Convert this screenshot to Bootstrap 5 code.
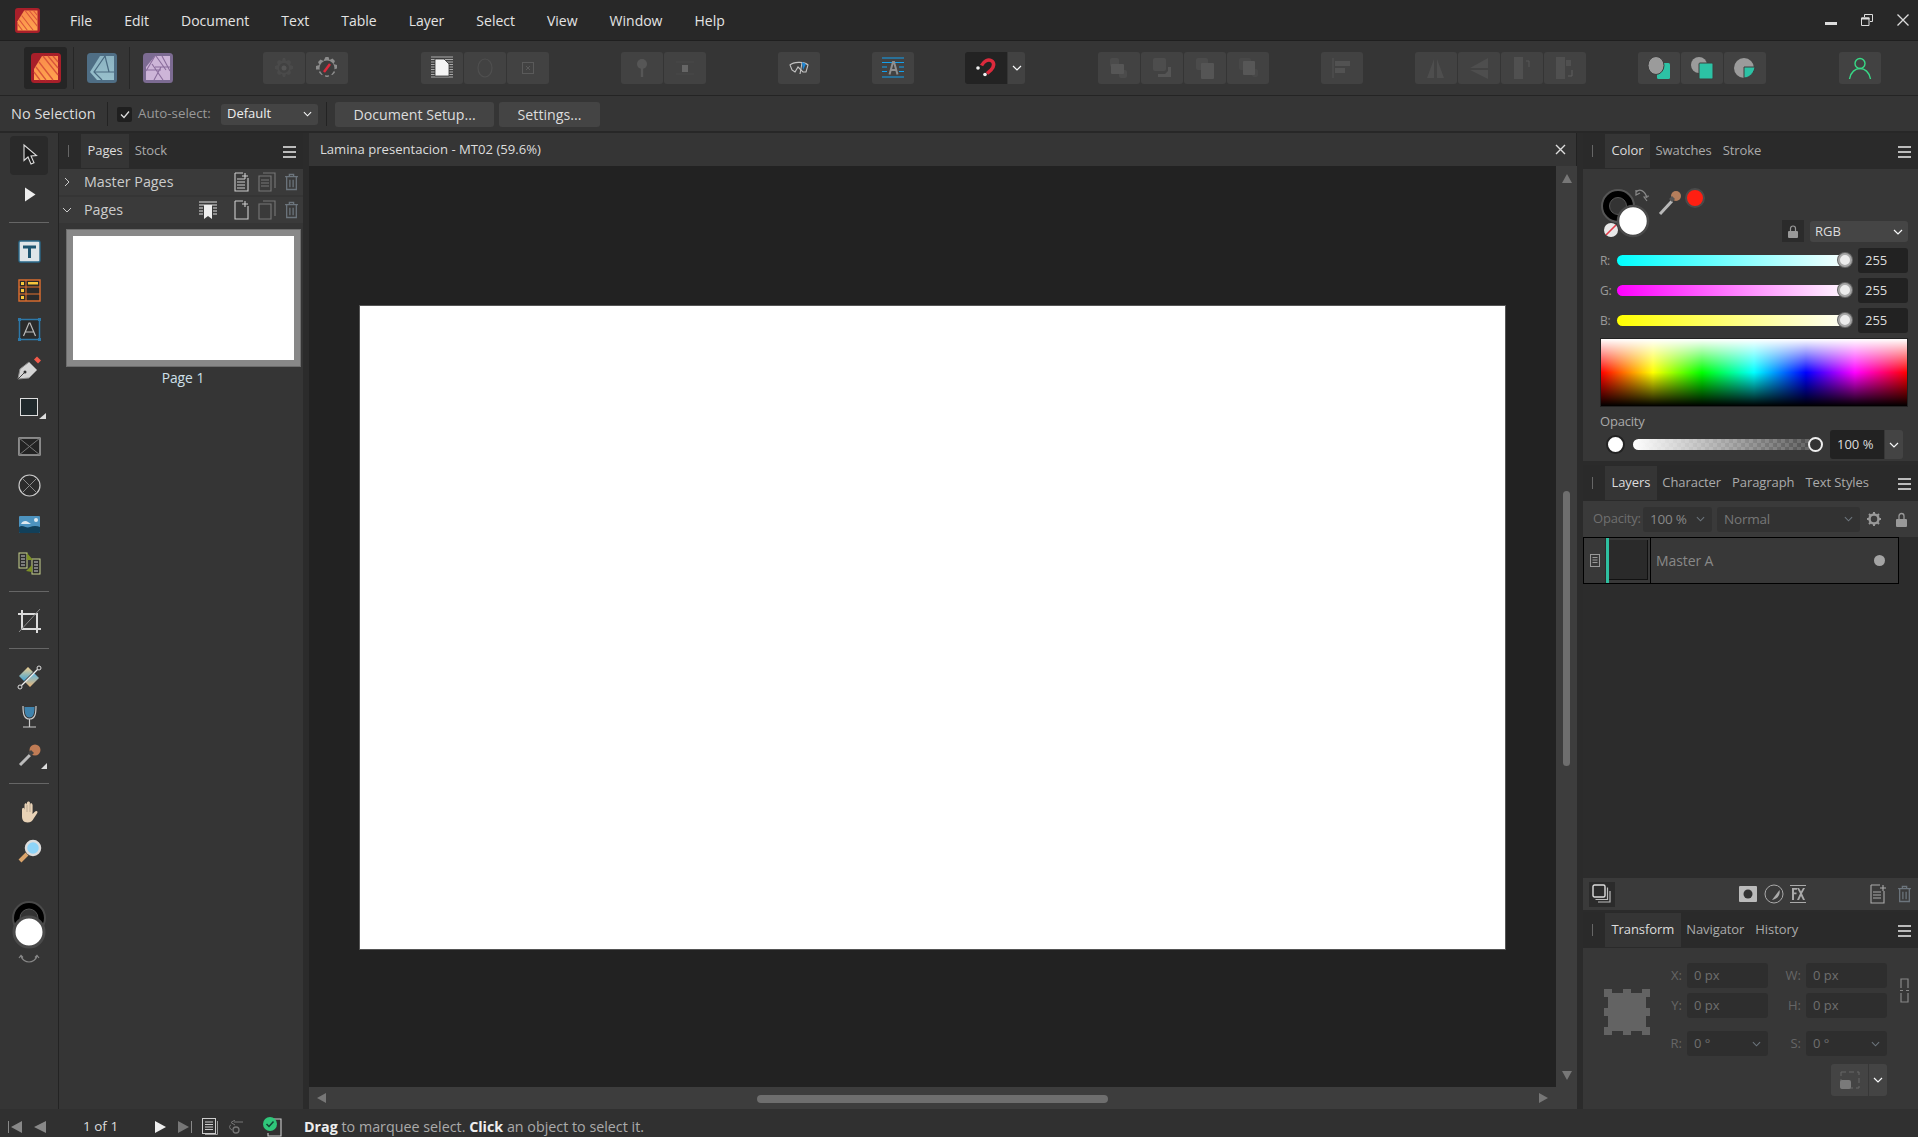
<!DOCTYPE html>
<html lang="en">
<head>
<meta charset="utf-8">
<title>Affinity Publisher</title>
<link href="https://cdn.jsdelivr.net/npm/bootstrap@5.3.0/dist/css/bootstrap.min.css" rel="stylesheet">
<style>
html,body{height:100%;margin:0;background:#282828;overflow:hidden}
body{font-family:"Open Sans","Noto Sans",sans-serif;font-size:13px;color:#ccc;width:1918px;height:1137px;display:flex;flex-direction:column}
svg{display:block;flex:none}
.af-menubar{height:41px;background:#282828;border-bottom:1px solid #1f1f1f;flex:none}
.af-logo{margin-left:15px;margin-right:30px}
.af-menu{gap:32px;font-size:14px;color:#e4e4e4}
.af-winbtns{margin-left:auto;margin-right:9px;gap:24px}
.af-toolbar{height:55px;background:#353535;border-bottom:1px solid #242424;flex:none;padding-left:24px}
.af-persona{width:43px;height:42px;border-radius:3px;display:flex;align-items:center;justify-content:center}
.af-persona-on{background:#252525}
.af-vline{width:1px;background:#262626;height:42px;margin:0 6px}
.af-tb{width:42px;height:32px;background:#424242;border-radius:3px;display:flex;align-items:center;justify-content:center;flex:none}
.af-tbdark{background:#232323;border-radius:3px 0 0 3px}
.af-tbdrop{width:17px;height:32px;background:#424242;border-radius:0 3px 3px 0;display:flex;align-items:center;justify-content:center;margin-left:1px}
.af-grp{gap:1px}
.ms-g1{margin-left:84px}.ms-g2{margin-left:73px}.ms-g3{margin-left:72px}.ms-g4{margin-left:72px}.ms-g5{margin-left:52px}.ms-g6{margin-left:51px}.ms-g7{margin-left:73px}.ms-g8{margin-left:52px}.ms-g9{margin-left:52px}.ms-g10{margin-left:73px}.ms-g11{margin-left:52px}
.af-context{height:37px;background:#353535;border-bottom:2px solid #272727;flex:none;font-size:14.5px;color:#ddd;padding-top:1px}
.af-nosel{margin-left:11px;width:84px;white-space:nowrap}
.af-ctxdiv{width:1px;height:24px;background:#232323;flex:none}
.af-ctxdiv1{margin-left:12px}
.af-check{width:15px;height:15px;background:#1f1f1f;border-radius:2px;margin-left:9px;display:flex;align-items:center;justify-content:center}
.af-autolab{color:#999;margin-left:6px;width:74px;font-size:13.3px;white-space:nowrap}
.af-ctxsel{width:97px;height:21px;margin-left:9px;margin-right:8px;background:#444;border-radius:3px;padding:0 6px;font-size:13px;color:#eee;display:flex;align-items:center;justify-content:space-between}
.btn.af-ctxbtn{height:25px;padding:0;background:#444;border:0;border-radius:3px;font-size:14.2px;color:#ddd;line-height:25px;--bs-btn-hover-bg:#444}
.af-w159{width:159px;margin-left:8px}.af-w101{width:101px;margin-left:5px}
.af-main{flex:1 1 0;min-height:0}
.af-tools{width:59px;background:#353535;border-right:1px solid #232323;flex:none;align-items:center;padding-top:3px}
.af-tool{width:38px;height:39px;flex:none;border-radius:4px}
.af-tool-on{background:#2a2a2a}
.af-tooldiv{width:40px;height:1px;background:#666;margin:8px 0 9px;flex:none}
.af-colwid{margin-top:30px}
.af-pages{width:244px;background:#353535;flex:none}
.af-head{height:36px;background:#2a2a2a;flex:none;position:relative;padding-left:22px;padding-top:1px}
.af-handle{position:absolute;left:9px;top:12px;width:1px;height:12px;background:#666}
.af-tabs{gap:0;flex-wrap:nowrap}
.af-tabs .nav-link{padding:0 5.5px;height:34px;line-height:32px;font-size:13px;color:#aaa;border:0;border-radius:0;white-space:nowrap;letter-spacing:-.08px}
.af-tabs .nav-link.active{background:#353535;color:#ddd;padding:0 6.5px}
.af-burger{margin-left:auto;margin-right:7px;align-self:center}
.af-row{height:26px;background:#3a3a3a;margin-bottom:2px;padding-left:3px;flex:none;font-size:14.3px;color:#ccc}
.af-rowlab{margin-left:12px;white-space:nowrap}
.af-rowicons{margin-right:4px;margin-left:auto;gap:8px}
.af-rowicon1{margin-right:9px}
.af-thumb{margin:5px 3px 0 8px;height:136px;width:233px;border:6px solid #888;outline:1px solid #6d6d6d;background:#fff;flex:none}
.af-pagelab{width:244px;padding-left:4px;text-align:center;margin-top:2px;font-size:13.8px;color:#cfe0ea}
.af-gut{width:6px;background:#2b2b2b;flex:none}
.af-center{width:1268px;flex:none}
.af-doctab{height:33px;background:#353535;border-right:1px solid #222;flex:none;padding-left:11px;padding-right:10px;font-size:13.1px;color:#ddd}
.af-canvas{flex:1 1 0;min-height:0;background:#222}
.af-artboard{flex:1 1 0;display:flex;align-items:center;justify-content:center;padding-top:2px}
.af-page{width:1145px;height:643px;background:#fff;outline:1px solid #555}
.af-vbar{width:21px;background:#3d3d3d;flex:none;align-items:center;padding-top:8px;padding-bottom:7px}
.af-vthumb{width:7px;height:275px;background:#6e6e6e;border-radius:4px;margin-top:308px}
.af-hbar{height:22px;background:#3d3d3d;flex:none;padding-left:8px;padding-right:29px}
.af-hthumb{width:351px;height:8px;background:#6e6e6e;border-radius:4px;margin-left:431px;margin-top:1px}
.af-right{width:335px;flex:none;background:#2b2b2b}
.af-body{background:#373737}
.af-colorbody{height:292px;flex:none;margin-bottom:4px}
.af-c1{padding:0 10px 0 7px;height:79px}
.af-c1svg{margin-bottom:4px}
.af-lock{width:22px;height:22px;background:#2b2b2b;display:flex;align-items:center;justify-content:center;margin-right:6px;margin-bottom:6px}
.af-rgb{width:98px;height:21px;background:#454545;border-radius:3px;color:#ddd;font-size:13px;display:flex;align-items:center;justify-content:space-between;padding:0 5px;margin-bottom:6px}
.af-sl{height:25px;margin-bottom:5px;padding-left:17px;padding-right:10px}
.af-sllab{width:17px;font-size:12px;color:#999;letter-spacing:-.3px}
.af-track{width:235px;height:11px;border-radius:6px;position:relative;flex:none}
.af-tr{background:linear-gradient(90deg,#0ff,#fff)}
.af-tg{background:linear-gradient(90deg,#f0f,#fff)}
.af-tb2{background:linear-gradient(90deg,#ff0,#fff)}
.af-knob{position:absolute;right:0;top:-2px;width:14px;height:14px;border-radius:50%;background:#ececec;border:2px solid #a8a8a8;box-shadow:0 0 0 1px #666}
.af-num{width:50px;height:25px;margin-left:6px;background:#222;border-radius:3px;color:#ddd;font-size:13px;padding-left:7px;padding-top:1px;display:flex;align-items:center;flex:none}
.af-spec{height:69px;margin:0 10px 0 17px;border:1px solid #222;background:linear-gradient(180deg,#fff 0%,rgba(255,255,255,0) 50%,rgba(0,0,0,0) 50%,#000 100%),linear-gradient(90deg,#f00,#ff0 17%,#0f0 33%,#0ff 50%,#00f 67%,#f0f 83%,#f00);flex:none}
.af-oplab{padding-left:17px;margin-top:6px;height:17px;font-size:13px;color:#aaa;line-height:17px;letter-spacing:-.2px}
.af-oprow{padding-left:23px;height:29px}
.af-opdot{width:19px;height:19px;border-radius:50%;background:#fff;border:2px solid #222;flex:none}
.af-optrack{width:188px;height:11px;margin-left:8px;border-radius:6px;position:relative;background:linear-gradient(90deg,#fff,rgba(255,255,255,0)),repeating-conic-gradient(#5c5c5c 0 25%,#444 0 50%) 0 0/8px 8px;flex:none}
.af-opknob{position:absolute;right:-2px;top:-2px;width:15px;height:15px;border-radius:50%;background:#333;border:2px solid #eee}
.af-opnum{width:54px;height:29px;margin-left:9px;background:#222;border-radius:3px 0 0 3px;color:#ddd;padding-left:7px;display:flex;align-items:center;flex:none;font-size:13px}
.af-opdrop{width:18px;height:29px;background:#444;margin-left:1px;display:flex;align-items:center;justify-content:center;border-radius:0 3px 3px 0}
.af-layers{flex:1 1 0;min-height:0;background:#2c2c2c}
.af-laybar{height:36px;background:#3a3a3a;flex:none;color:#6f6f6f;font-size:13px;padding-left:10px;letter-spacing:-.2px}
.af-oplab2{width:50px;white-space:nowrap}
.af-lfield{height:25px;background:#323232;border-radius:3px;color:#888;font-size:13.5px;display:flex;align-items:center;justify-content:space-between;padding:0 7px;flex:none}
.af-w69{width:69px}.af-w143{width:143px;margin-left:5px;color:#777}
.af-gear{margin-left:7px}
.af-lolock{margin-left:auto;margin-right:11px}
.af-layrow{height:47px;width:316px;border:1px solid #000;background:#383838;flex:none}
.af-laycell{width:22px;display:flex;align-items:center;justify-content:center;border-right:1px solid #2a2a2a;height:100%}
.af-laythumb{width:45px;height:100%;border-left:3px solid #2fbfa0;border-right:1px solid #000;background:#383838;padding:2px 2px 3px 0;flex:none}
.af-laythumb div{height:100%;background:#2a2a2a;border-right:1px solid #111;border-bottom:1px solid #111}
.af-layname{margin-left:5px;font-size:14px;color:#888;flex-grow:1;letter-spacing:-.1px}
.af-laydot{width:11px;height:11px;border-radius:50%;background:#a4a4a4;margin-right:13px}
.af-laybtm{height:32px;background:#3a3a3a;flex:none;padding-left:6px;margin-bottom:2px}
.af-dupbox{width:26px;height:25px;background:#2b2b2b;display:flex;align-items:center;justify-content:center}
.af-m1{margin-left:124px}.af-m2{margin-left:7px}.af-m3{margin-left:6px}.af-m4{margin-left:64px}.af-m5{margin-left:10px}
.af-transform{flex:none;height:161px;padding-top:15px}
.af-anchor{margin-left:21px;margin-top:26px;margin-right:14px}
.af-grid{display:grid;grid-template-columns:23px 81px 38px 81px 30px;grid-template-rows:25px 25px 3px 25px;row-gap:5px;align-items:center}
.af-tlab{text-align:right;color:#666;font-size:13px;padding-right:5px}
.af-tfield{height:25px;background:#2e2e2e;border-radius:3px;color:#6f6f6f;font-size:13px;padding:0 7px;display:flex;align-items:center;justify-content:space-between}
.af-gap{grid-column:1/6;height:3px}
.af-chain{grid-row:1/3;grid-column:5;justify-self:end;margin-right:8px}
.af-torig{margin-left:167px;margin-top:8px;height:32px;width:56px;display:flex}
.af-torig-main{width:37px;background:#444;border-radius:3px 0 0 3px;display:flex;align-items:center;justify-content:center}
.af-torig-dd{width:18px;background:#444;margin-left:1px;border-radius:0 3px 3px 0;display:flex;align-items:center;justify-content:center}
.af-status{height:28px;background:#303030;flex:none;font-size:14.3px;color:#aaa;padding-top:7px}
.af-status b{color:#eee;font-weight:700}
.af-count{width:34px;margin-left:37px;margin-right:38px;color:#ddd;white-space:nowrap;font-size:13.5px}
.af-st1{margin-left:10px}.af-st2{margin-left:10px}.af-st3{margin-left:18px}
.af-hint{margin-left:22px;white-space:nowrap}
</style>
</head>
<body>
<svg width="0" height="0" class="position-absolute">
<defs>
<symbol id="chev" viewBox="0 0 10 6"><path d="M1 1l4 4 4-4" fill="none" stroke="currentColor" stroke-width="1.2"/></symbol>
<symbol id="burger" viewBox="0 0 13 12"><path d="M0 1h13M0 6h13M0 11h13" stroke="#bbb" stroke-width="2"/></symbol>
<symbol id="trash" viewBox="0 0 14 16"><path d="M1 3h12M5 3V1h4v2M2.500 3v12h9V3M5.500 6v7M8.500 6v7" fill="none" stroke="currentColor" stroke-width="1.2"/></symbol>
<linearGradient id="lg-pub" x1="0" y1="0" x2="0" y2="1"><stop offset="0" stop-color="#f98b4b"/><stop offset="1" stop-color="#ffa44f"/></linearGradient>
<linearGradient id="lg-fill1" x1="0" y1="0" x2="0" y2="1"><stop offset="0" stop-color="#f2cf8f"/><stop offset="1" stop-color="#3fa3d6"/></linearGradient>
<linearGradient id="lg-fill2" x1="0" y1="0" x2="0" y2="1"><stop offset="0" stop-color="#5fb9e3"/><stop offset="1" stop-color="#eeb675"/></linearGradient>
<symbol id="pub" viewBox="0 0 30 30"><rect width="30" height="30" rx="3.500" fill="#a81f2a"/><path d="M11 3h16v24H3V16z" fill="url(#lg-pub)"/><path d="M12 3l15 19M8 9l14 18M5 14l10 13M3 19l6 8M17 3l10 12M22 3l5 6" stroke="#d9543a" stroke-width="1.300"/></symbol>
</defs>
</svg>

<div class="af-menubar d-flex align-items-center">
  <svg class="af-logo" width="25" height="25"><use href="#pub"/></svg>
  <div class="af-menu d-flex"><span>File</span><span>Edit</span><span>Document</span><span>Text</span><span>Table</span><span>Layer</span><span>Select</span><span>View</span><span>Window</span><span>Help</span></div>
  <div class="af-winbtns d-flex align-items-center">
    <svg width="12" height="12" viewBox="0 0 12 12"><rect y="8" width="12" height="3" fill="#ddd"/></svg>
    <svg width="12" height="12" viewBox="0 0 12 12"><path d="M3.500 3V.5h8v7H9M.5 4h7.500v7.500H.5z" fill="none" stroke="#ddd"/><path d="M.5 4.500h8" stroke="#ddd" stroke-width="2"/></svg>
    <svg width="12" height="12" viewBox="0 0 12 12"><path d="M.5.5l11 11M11.500.5l-11 11" stroke="#ddd" stroke-width="1.300"/></svg>
  </div>
</div>

<div class="af-toolbar d-flex align-items-center">
  <div class="af-persona af-persona-on"><svg width="30" height="30"><use href="#pub"/></svg></div>
  <div class="af-vline"></div>
  <div class="af-persona"><svg width="30" height="30" viewBox="0 0 30 30"><defs><linearGradient id="lg-d" x1="0" y1="0" x2="0" y2="1"><stop offset="0" stop-color="#8cb3c2"/><stop offset="1" stop-color="#98c0cc"/></linearGradient></defs><rect width="30" height="30" rx="3.500" fill="#4f6e85"/><path d="M13 3h14v24H10L3 19z" fill="url(#lg-d)"/><path d="M18 3L7 19l8 8M7 19h20M18 3l4 16" fill="none" stroke="#4a6a80" stroke-width="1.200"/></svg></div>
  <div class="af-vline"></div>
  <div class="af-persona"><svg width="30" height="30" viewBox="0 0 30 30"><rect width="30" height="30" rx="3.500" fill="#7c6b92"/><path d="M12 3h15v24H3V14z" fill="#cdb5d8"/><path d="M12 3l-9 15M19 3l8 15M3 17h15M11 27l7-13M9 11l11 16M27 14H12M13 3l10 14" fill="none" stroke="#8a6d9c" stroke-width="1.100"/></svg></div>
  <div class="af-grp d-flex ms-g1">
    <div class="af-tb"><svg width="20" height="20" viewBox="0 0 20 20"><path d="M9 0h2l1 3 3-1 2 2-1 3 3 1v3l-3 1 1 3-2 2-3-1-1 3H9l-1-3-3 1-2-2 1-3-3-1V8l3-1-1-3 2-2 3 1z" fill="#4a4a4a"/><circle cx="10" cy="10" r="5" fill="#424242"/><circle cx="10" cy="10" r="2.500" fill="#555"/></svg></div>
    <div class="af-tb"><svg width="24" height="24" viewBox="0 0 24 24"><path d="M10.500 1h3l1 3 3-1.500 2.500 2.500-1.500 3 3.500 1v3.500l-3.500 1 1.500 3-2.500 2.500-3-1.500-1 3.500h-3l-1-3.500-3 1.500-2.500-2.500 1.500-3L1 13.500V10l3.500-1-1.500-3 2.500-2.500 3 1.500z" fill="#8c8c8c"/><circle cx="12" cy="12" r="7.500" fill="#3c3c3c"/><path d="M9 16l6-8" stroke="#dc2a3c" stroke-width="2.500"/></svg></div>
  </div>
  <div class="af-grp d-flex ms-g2">
    <div class="af-tb"><svg width="24" height="24" viewBox="0 0 24 24"><path d="M1 1h22M1 3.500h22M1 6h22M1 8.500h22M1 11h22M1 13.500h22M1 16h22M1 18.500h22M1 21h22" stroke="#aaa" stroke-width="1"/><path d="M5 3h9l5 5v12H5z" fill="#f4f4f4" stroke="#333" stroke-width=".8"/></svg></div>
    <div class="af-tb"><svg width="18" height="20" viewBox="0 0 18 20"><ellipse cx="9" cy="10" rx="7" ry="9" fill="none" stroke="#4f4f4f" stroke-width="1.200"/></svg></div>
    <div class="af-tb"><svg width="20" height="20" viewBox="0 0 20 20"><rect x="4.500" y="4.500" width="11" height="11" fill="none" stroke="#5a5a5a"/><path d="M8 8l4 4M12 8l-4 4" stroke="#5a5a5a"/></svg></div>
  </div>
  <div class="af-grp d-flex ms-g3">
    <div class="af-tb"><svg width="14" height="22" viewBox="0 0 14 22"><circle cx="7" cy="7" r="5" fill="#565656"/><rect x="5.800" y="11" width="2.400" height="9" fill="#565656"/></svg></div>
    <div class="af-tb"><svg width="22" height="22" viewBox="0 0 22 22"><rect x="8" y="8" width="6" height="7" fill="#666"/><path d="M2 5h18M2 17h18" stroke="#484848"/></svg></div>
  </div>
  <div class="ms-g4"><div class="af-tb"><svg width="22" height="22" viewBox="0 0 22 22"><path d="M2 8c3-3 14-4 18 0l-2 7h-3l-5-5-3 5-3-2z" fill="none" stroke="#c4c4c4" stroke-width="1.100"/><path d="M12 17l2-11" stroke="#c4c4c4" stroke-width="1.100"/><path d="M14 5l4 2-3 6z" fill="#1e88d8"/></svg></div></div>
  <div class="ms-g5"><div class="af-tb"><svg width="24" height="24" viewBox="0 0 24 24"><path d="M1 2h22M1 6.500h22M1 11h5M18 11h5M1 15.500h5M18 15.500h5M1 21h22" stroke="#12a0ef" stroke-width="1.200"/><path d="M8.500 18.500L12 6h1l3.500 12.500M10 14h5" fill="none" stroke="#8f8f8f" stroke-width="2"/></svg></div></div>
  <div class="d-flex ms-g6">
    <div class="af-tb af-tbdark"><svg width="24" height="24" viewBox="0 0 24 24"><path d="M7.500 9.500C10 5 14 3 17 4.500c4 2 3 6.500 0 9.500l-4 3.500" fill="none" stroke="#dc2a3c" stroke-width="3.600"/><circle cx="4" cy="12" r="1.800" fill="#f2f2f2"/><circle cx="11" cy="18.500" r="1.800" fill="#f2f2f2"/></svg></div>
    <div class="af-tbdrop"><svg width="10" height="6" class="text-light"><use href="#chev"/></svg></div>
  </div>
  <div class="af-grp d-flex ms-g7">
    <div class="af-tb"><svg width="24" height="24" viewBox="0 0 24 24"><rect x="3" y="2" width="9" height="9" rx="2" fill="#4b4b4b"/><rect x="12" y="14" width="8" height="8" rx="2" fill="#4b4b4b"/><rect x="4" y="8" width="13" height="10" rx="1" fill="#565656"/></svg></div>
    <div class="af-tb"><svg width="24" height="24" viewBox="0 0 24 24"><rect x="3" y="2" width="13" height="13" rx="2" fill="#4d4d4d"/><path d="M18 11h3v10H8v-3h7l3-3z" fill="#555"/></svg></div>
    <div class="af-tb"><svg width="24" height="24" viewBox="0 0 24 24"><rect x="3" y="2" width="12" height="12" rx="2" fill="#4b4b4b"/><rect x="8" y="7" width="13" height="16" rx="1" fill="#555"/></svg></div>
    <div class="af-tb"><svg width="24" height="24" viewBox="0 0 24 24"><rect x="3" y="2" width="12" height="12" rx="2" fill="#484848"/><rect x="16" y="13" width="6" height="8" rx="2" fill="#484848"/><rect x="7" y="5" width="12" height="14" rx="1" fill="#575757"/></svg></div>
  </div>
  <div class="ms-g8"><div class="af-tb"><svg width="24" height="24" viewBox="0 0 24 24"><path d="M3 2v20" stroke="#4e4e4e" stroke-width="1.500"/><path d="M5 5h15v5H5zM5 12h10v5H5z" fill="#525252"/></svg></div></div>
  <div class="af-grp d-flex ms-g9">
    <div class="af-tb"><svg width="24" height="24" viewBox="0 0 24 24"><path d="M10 3v19H3zM13 3v19h7z" fill="#4e4e4e"/></svg></div>
    <div class="af-tb"><svg width="24" height="24" viewBox="0 0 24 24"><path d="M21 2v10H3zM21 14v9L3 14z" fill="#4e4e4e"/></svg></div>
    <div class="af-tb"><svg width="24" height="24" viewBox="0 0 24 24"><rect x="4" y="1" width="9" height="22" fill="#505050"/><path d="M19 11V5h-3" fill="none" stroke="#565656"/></svg></div>
    <div class="af-tb"><svg width="24" height="24" viewBox="0 0 24 24"><rect x="3" y="1" width="9" height="22" fill="#505050"/><path d="M13 4h5v6h-5z" fill="#505050"/><path d="M19 14v6h-4" fill="none" stroke="#5e5e5e"/></svg></div>
  </div>
  <div class="af-grp d-flex ms-g11">
    <div class="af-tb"><svg width="24" height="24" viewBox="0 0 24 24"><rect x="10" y="7" width="13" height="16" rx="1.500" fill="#2cc2a5"/><ellipse cx="9" cy="9.500" rx="8" ry="9" fill="#9b9b9b" stroke="#3c3c3c"/></svg></div>
    <div class="af-tb"><svg width="24" height="24" viewBox="0 0 24 24"><circle cx="9" cy="9" r="8" fill="#9b9b9b"/><rect x="9" y="7" width="14" height="16" rx="1" fill="#2cc2a5" stroke="#3c3c3c"/></svg></div>
    <div class="af-tb"><svg width="24" height="24" viewBox="0 0 24 24"><circle cx="11" cy="12" r="10" fill="#9b9b9b"/><path d="M11 11h11c-.5 5-5 11-11 11z" fill="#2cc2a5" stroke="#3c3c3c"/></svg></div>
  </div>
  <div class="ms-g10"><div class="af-tb"><svg width="24" height="24" viewBox="0 0 24 24"><circle cx="12" cy="7.500" r="5" fill="none" stroke="#38d986" stroke-width="1.400"/><path d="M1.500 23c1-7 6-10.500 10.500-10.500S21.500 16 22.500 23" fill="none" stroke="#38d986" stroke-width="1.400"/></svg></div></div>
</div>

<div class="af-context d-flex align-items-center">
  <div class="af-nosel">No Selection</div>
  <div class="af-ctxdiv af-ctxdiv1"></div>
  <div class="af-check"><svg width="10" height="9" viewBox="0 0 10 9"><path d="M1 4.500l3 3 5-6" fill="none" stroke="#ddd" stroke-width="1.300"/></svg></div>
  <div class="af-autolab">Auto-select:</div>
  <div class="af-ctxsel"><span>Default</span><svg width="9" height="6" class="text-light"><use href="#chev"/></svg></div>
  <div class="af-ctxdiv"></div>
  <button type="button" class="btn af-ctxbtn af-w159">Document Setup...</button>
  <button type="button" class="btn af-ctxbtn af-w101">Settings...</button>
</div>

<div class="af-main d-flex">
  <div class="af-tools d-flex flex-column">
    <div class="af-tool af-tool-on"><svg width="38" height="39" viewBox="0 0 38 39"><path d="M14 9l0 15.500 4-3.500 3 7 3-1.300-3-6.700 5.500-.5z" fill="#1a1a1a" stroke="#ddd" stroke-width="1.100"/></svg></div>
    <div class="af-tool"><svg width="38" height="39" viewBox="0 0 38 39"><path d="M15 12.500v14l10.500-7z" fill="#eee"/></svg></div>
    <div class="af-tooldiv"></div>
    <div class="af-tool"><svg width="38" height="39" viewBox="0 0 38 39"><rect x="9" y="9" width="21" height="21" rx="1.500" fill="#dfe5e8" stroke="#2b6a8a" stroke-width="1.400"/><path d="M13 13.500h13v3h-5V26h-3v-9.500h-5z" fill="#1e5570"/></svg></div>
    <div class="af-tool"><svg width="38" height="39" viewBox="0 0 38 39"><rect x="9" y="9" width="21" height="21" fill="#2a2a2a" stroke="#e2702f" stroke-width="1.400"/><path d="M9 16h21M9 23h21M16 9v21" stroke="#e2702f"/><path d="M11 11h3v3h-3zM11 18h3v3h-3zM11 25h3v3h-3zM18 11h10v2.500H18z" fill="#f6c63c"/></svg></div>
    <div class="af-tool"><svg width="38" height="39" viewBox="0 0 38 39"><rect x="9.500" y="9.500" width="20" height="20" fill="#2a2a2a" stroke="#2e78a8" stroke-width="1.500"/><path d="M8 8h3v3H8zM28 8h3v3h-3zM8 28h3v3H8zM28 28h3v3h-3z" fill="#2e78a8"/><path d="M13.500 26L19 13h1l5.500 13M15.500 22h8" fill="none" stroke="#bbb" stroke-width="1.200"/></svg></div>
    <div class="af-tool"><svg width="38" height="39" viewBox="0 0 38 39"><path d="M8 30l2-10 9-7 8 8-8 8z" fill="#d4d4d4" stroke="#8a8a8a"/><path d="M8 30l7-7" stroke="#444"/><circle cx="15" cy="23" r="1.500" fill="#333"/><path d="M24 10.500l3-3 4 4-3 3z" fill="#f45a4a"/></svg></div>
    <div class="af-tool"><svg width="38" height="39" viewBox="0 0 38 39"><rect x="10.500" y="10.500" width="17" height="17" fill="#20292c" stroke="#ddd"/><path d="M29 31h7v-6z" fill="#ddd"/></svg></div>
    <div class="af-tool"><svg width="38" height="39" viewBox="0 0 38 39"><rect x="9" y="11" width="21" height="17" fill="#232323" stroke="#c4c4c4" stroke-width="1.200"/><path d="M9 11l21 17M30 11L9 28" stroke="#777"/></svg></div>
    <div class="af-tool"><svg width="38" height="39" viewBox="0 0 38 39"><circle cx="19.500" cy="19.500" r="10.500" fill="#2b2b2b" stroke="#c8c8c8" stroke-width="1.200"/><path d="M12 12l15 15M27 12L12 27" stroke="#8a8a8a"/></svg></div>
    <div class="af-tool"><svg width="38" height="39" viewBox="0 0 38 39"><rect x="9" y="11" width="21" height="17" rx="1" fill="#4d93bf"/><path d="M9 22c4-3 7 2 11 0 3-1.500 7-1.500 10 0v5a1 1 0 0 1-1 1H10a1 1 0 0 1-1-1z" fill="#12405a"/><path d="M11 19c1-3 5-4 7-2l3 2z" fill="#dfe9ef"/><circle cx="26" cy="15" r="2" fill="#dfe9ef"/></svg></div>
    <div class="af-tool"><svg width="38" height="39" viewBox="0 0 38 39"><rect x="9" y="9" width="8" height="15" fill="#2c2c2c" stroke="#c9d38f"/><rect x="22" y="15" width="8" height="15" fill="#2c2c2c" stroke="#c9d38f"/><path d="M17 9l6 7-6 0zM22 28l-6-1 6-6z" fill="#7d9127"/><path d="M11 12h4M11 15h4M11 18h4M11 21h4M24 18h4M24 21h4M24 24h4M24 27h4" stroke="#ccc"/></svg></div>
    <div class="af-tooldiv"></div>
    <div class="af-tool"><svg width="38" height="39" viewBox="0 0 38 39"><path d="M12 9v19h19M8 13h19v19" fill="none" stroke="#dcdcdc" stroke-width="2"/><path d="M30 8L9 31" stroke="#8a8a8a"/></svg></div>
    <div class="af-tooldiv"></div>
    <div class="af-tool"><svg width="38" height="39" viewBox="0 0 38 39"><path d="M10 22l9-9 5 5-9 9z" transform="translate(-1 -4)" fill="url(#lg-fill1)"/><path d="M15 26l9-9 5 5-9 9z" transform="translate(0 -2)" fill="url(#lg-fill2)"/><path d="M11 28L28 11" stroke="#eee" stroke-width="1.200"/><circle cx="10" cy="29" r="2" fill="#333" stroke="#ddd"/><circle cx="29" cy="10" r="2" fill="#333" stroke="#ddd"/></svg></div>
    <div class="af-tool"><svg width="38" height="39" viewBox="0 0 38 39"><path d="M13 9c0 8 1 13 6.500 13S26 17 26 9" fill="none" stroke="#ccc" stroke-width="1.200"/><path d="M14.500 10h10c0 6-1 10.500-5 10.500s-5-4.500-5-10.500z" fill="#3f83ad"/><path d="M19.500 22v8M13 30h13" stroke="#ccc" stroke-width="1.200"/></svg></div>
    <div class="af-tool"><svg width="38" height="39" viewBox="0 0 38 39"><path d="M10 29l10-10" stroke="#bbb" stroke-width="3"/><circle cx="25" cy="14" r="5.500" fill="#c07c55"/><path d="M18 17l3-3 3 3-3 3z" fill="#444"/><path d="M31 33h6v-6z" fill="#ddd"/></svg></div>
    <div class="af-tooldiv"></div>
    <div class="af-tool"><svg width="38" height="39" viewBox="0 0 38 39"><path d="M12 17c0-3 2.500-3 2.500 0v-5c0-2.500 2.500-2.500 2.500 0v-2c0-2 3-2 3 0v2c0-2.500 2.500-2.500 2.500 0v9l2-2c2-2 4-.5 2.500 1.500l-3 4.500c-1.500 3-3.500 4.500-6.500 4.500-4 0-5.500-3-5.500-6z" fill="#e8d2b6"/><path d="M17 12v7M20 10v9M22.500 12v7" stroke="#a89884" stroke-width=".7"/></svg></div>
    <div class="af-tool"><svg width="38" height="39" viewBox="0 0 38 39"><path d="M10 29l7-7" stroke="#d9a36a" stroke-width="4"/><circle cx="23" cy="16" r="7" fill="#8ed4f8" stroke="#dcdcdc" stroke-width="2.500"/></svg></div>
    <div class="af-colwid"><svg width="38" height="62" viewBox="0 0 38 62"><circle cx="19" cy="17" r="16" fill="#000" stroke="#4a4a4a" stroke-width="2"/><circle cx="19" cy="17" r="9" fill="#333" stroke="#555"/><circle cx="19" cy="31" r="15" fill="#fff" stroke="#4a4a4a" stroke-width="3"/><path d="M11 55c1 4 5 6 8 6s7-2 8-6M9 57l2-2.500 2 2M25 56.500l2-2 2 2.500" fill="none" stroke="#888" stroke-width="1.200"/></svg></div>
  </div>

  <div class="af-pages d-flex flex-column">
    <div class="af-head d-flex">
      <div class="af-handle"></div>
      <ul class="nav af-tabs"><li class="nav-item"><span class="nav-link active">Pages</span></li><li class="nav-item"><span class="nav-link">Stock</span></li></ul>
      <svg class="af-burger" width="13" height="12"><use href="#burger"/></svg>
    </div>
    <div class="af-row d-flex align-items-center">
      <svg width="10" height="10" viewBox="0 0 10 10"><path d="M3 1l4 4-4 4" fill="none" stroke="#ccc"/></svg>
      <span class="af-rowlab">Master Pages</span>
      <div class="d-flex align-items-center af-rowicons">
        <svg width="16" height="20" viewBox="0 0 16 20"><path d="M1 1h8M1 1v18h13V6M3 7h8M3 10h8M3 13h8M3 16h8M11 1v6M8 4h6" fill="none" stroke="#ccc" stroke-width="1.100"/></svg>
        <svg width="18" height="20" viewBox="0 0 18 20"><path d="M5 1h12v15M1 4h12v15H1zM3 8h8M3 11h8M3 14h8" fill="none" stroke="#777" stroke-width="1.100"/></svg>
        <svg width="15" height="20" class="text-secondary"><use href="#trash"/></svg>
      </div>
    </div>
    <div class="af-row d-flex align-items-center">
      <svg width="10" height="10" viewBox="0 0 10 10"><path d="M1 3l4 4 4-4" fill="none" stroke="#ccc"/></svg>
      <span class="af-rowlab">Pages</span>
      <div class="d-flex align-items-center af-rowicons">
        <svg class="af-rowicon1" width="18" height="20" viewBox="0 0 18 20"><path d="M0 2h18M0 5h18M0 8h4M14 8h4M0 11h4M14 11h4M0 14h4M14 14h4" stroke="#ddd" stroke-width="1.100"/><path d="M5 5h8v14l-4-3-4 3z" fill="#eee"/></svg>
        <svg width="16" height="20" viewBox="0 0 16 20"><path d="M1 1h8M1 1v18h13V6M11 1v6M8 4h6" fill="none" stroke="#ccc" stroke-width="1.100"/></svg>
        <svg width="18" height="20" viewBox="0 0 18 20"><path d="M5 1h12v15M1 4h12v15H1z" fill="none" stroke="#777" stroke-width="1.100"/></svg>
        <svg width="15" height="20" class="text-secondary"><use href="#trash"/></svg>
      </div>
    </div>
    <div class="af-thumb"></div>
    <div class="af-pagelab">Page 1</div>
  </div>
  <div class="af-gut"></div>

  <div class="af-center d-flex flex-column">
    <div class="af-doctab d-flex align-items-center justify-content-between"><span>Lamina presentacion - MT02 (59.6%)</span><svg width="11" height="11" viewBox="0 0 11 11"><path d="M1 1l9 9M10 1l-9 9" stroke="#ddd" stroke-width="1.400"/></svg></div>
    <div class="af-canvas d-flex">
      <div class="af-artboard"><div class="af-page"></div></div>
      <div class="af-vbar d-flex flex-column">
        <svg width="10" height="9" viewBox="0 0 10 9"><path d="M5 0l5 9H0z" fill="#777"/></svg>
        <div class="af-vthumb"></div>
        <svg class="mt-auto" width="10" height="9" viewBox="0 0 10 9"><path d="M0 0h10L5 9z" fill="#777"/></svg>
      </div>
    </div>
    <div class="af-hbar d-flex align-items-center">
      <svg width="9" height="10" viewBox="0 0 9 10"><path d="M9 0v10L0 5z" fill="#777"/></svg>
      <div class="af-hthumb"></div>
      <svg class="ms-auto" width="9" height="10" viewBox="0 0 9 10"><path d="M0 0v10l9-5z" fill="#777"/></svg>
    </div>
  </div>
  <div class="af-gut"></div>

  <div class="af-right d-flex flex-column">
    <div class="af-head d-flex"><div class="af-handle"></div>
      <ul class="nav af-tabs"><li class="nav-item"><span class="nav-link active">Color</span></li><li class="nav-item"><span class="nav-link">Swatches</span></li><li class="nav-item"><span class="nav-link">Stroke</span></li></ul>
      <svg class="af-burger" width="13" height="12"><use href="#burger"/></svg>
    </div>
    <div class="af-colorbody af-body">
      <div class="af-c1 d-flex align-items-end">
        <svg class="af-c1svg" width="115" height="68" viewBox="0 0 115 68">
          <circle cx="28" cy="30" r="16" fill="#000" stroke="#555" stroke-width="2"/><circle cx="28" cy="30" r="8.500" fill="#333" stroke="#555"/>
          <circle cx="43" cy="45" r="15" fill="#fff" stroke="#4a4a4a" stroke-width="2.500"/>
          <circle cx="21" cy="54" r="7" fill="#e8e8e8"/><path d="M16 59l10-10" stroke="#e23a48" stroke-width="1.600"/>
          <path d="M46 16c4-4 9-1 11 6M46 14l0 5 4-2M57 25l-3-4 5-1" fill="none" stroke="#888" stroke-width="1.200"/>
          <path d="M70 38l12-13" stroke="#b8b8b8" stroke-width="3"/><circle cx="86" cy="20" r="5" fill="#b57e5c"/><path d="M79 23l3-3 3 3-3 3z" fill="#555"/>
          <circle cx="105" cy="22" r="9" fill="#ff1f12" stroke="#4a4a4a" stroke-width="2"/>
        </svg>
        <div class="af-lock ms-auto"><svg width="10" height="13" viewBox="0 0 10 13"><path d="M2.500 6V3.500a2.500 2.500 0 0 1 5 0V6" fill="none" stroke="#999" stroke-width="1.200"/><rect y="6" width="10" height="7" rx="1" fill="#999"/></svg></div>
        <div class="af-rgb"><span>RGB</span><svg width="10" height="6" class="text-light"><use href="#chev"/></svg></div>
      </div>
      <div class="af-sl d-flex align-items-center"><span class="af-sllab">R:</span><div class="af-track af-tr"><div class="af-knob"></div></div><div class="af-num">255</div></div>
      <div class="af-sl d-flex align-items-center"><span class="af-sllab">G:</span><div class="af-track af-tg"><div class="af-knob"></div></div><div class="af-num">255</div></div>
      <div class="af-sl d-flex align-items-center"><span class="af-sllab">B:</span><div class="af-track af-tb2"><div class="af-knob"></div></div><div class="af-num">255</div></div>
      <div class="af-spec"></div>
      <div class="af-oplab">Opacity</div>
      <div class="af-oprow d-flex align-items-center"><div class="af-opdot"></div><div class="af-optrack"><div class="af-opknob"></div></div><div class="af-opnum">100 %</div><div class="af-opdrop"><svg width="10" height="6" class="text-light"><use href="#chev"/></svg></div></div>
    </div>
    <div class="af-head d-flex"><div class="af-handle"></div>
      <ul class="nav af-tabs"><li class="nav-item"><span class="nav-link active">Layers</span></li><li class="nav-item"><span class="nav-link">Character</span></li><li class="nav-item"><span class="nav-link">Paragraph</span></li><li class="nav-item"><span class="nav-link">Text Styles</span></li></ul>
      <svg class="af-burger" width="13" height="12"><use href="#burger"/></svg>
    </div>
    <div class="af-laybar d-flex align-items-center">
      <span class="af-oplab2">Opacity:</span>
      <div class="af-lfield af-w69"><span>100 %</span><svg width="9" height="6" class="text-secondary"><use href="#chev"/></svg></div>
      <div class="af-lfield af-w143"><span>Normal</span><svg width="9" height="6" class="text-secondary"><use href="#chev"/></svg></div>
      <svg class="af-gear" width="14" height="14" viewBox="0 0 14 14"><circle cx="7" cy="7" r="4.500" fill="none" stroke="#999" stroke-width="2.500"/><path d="M7 0v3M7 11v3M0 7h3M11 7h3M2 2l2 2M10 10l2 2M12 2l-2 2M4 10l-2 2" stroke="#999" stroke-width="2"/></svg>
      <svg class="af-lolock" width="11" height="15" viewBox="0 0 11 15"><path d="M3 7V4a2.500 2.500 0 0 1 5 0v3" fill="none" stroke="#999" stroke-width="1.300"/><rect y="7" width="11" height="8" rx="1" fill="#999"/></svg>
    </div>
    <div class="af-layers d-flex flex-column">
      <div class="af-layrow d-flex align-items-center">
        <div class="af-laycell"><svg width="10" height="13" viewBox="0 0 10 13"><rect x=".5" y=".5" width="9" height="12" fill="none" stroke="#999"/><path d="M2.500 3.500h5M2.500 6h5M2.500 8.500h5" stroke="#999"/></svg></div>
        <div class="af-laythumb"><div></div></div>
        <span class="af-layname">Master A</span><div class="af-laydot"></div>
      </div>
    </div>
    <div class="af-laybtm d-flex align-items-center">
      <div class="af-dupbox"><svg width="20" height="20" viewBox="0 0 20 20"><path d="M6 18h12V7M3.500 15.500h12v-12" fill="none" stroke="#bbb" stroke-width="1.200"/><rect x="1" y="1" width="12" height="12" rx="1.500" fill="#2b2b2b" stroke="#ddd" stroke-width="1.400"/></svg></div>
      <svg class="af-m1" width="18" height="16" viewBox="0 0 18 16"><rect width="18" height="16" rx="1" fill="#bbb"/><circle cx="9" cy="8" r="4.500" fill="#333"/></svg>
      <svg class="af-m2" width="20" height="20" viewBox="0 0 20 20"><circle cx="10" cy="10" r="9" fill="none" stroke="#aaa"/><path d="M15.500 6C16.500 10 14 15 8 16z" fill="#aaa"/></svg>
      <svg class="af-m3" width="16" height="20" viewBox="0 0 16 20"><path d="M0 1.500h16M0 18.500h16" stroke="#aaa"/><path d="M2 4h5v1.800H4v2.700h2.500v1.700H4V16H2zM7 4h2l2 3.500L13 4h2l-3 5.500 3 6.500h-2l-2-4-2 4H7l3-6.500z" fill="#aaa"/></svg>
      <svg class="af-m4" width="17" height="20" viewBox="0 0 17 20"><path d="M1 1h9M1 1v18h13V7M3 8h8M3 11h8M3 14h8M13 1v6M10 4h6" fill="none" stroke="#aaa" stroke-width="1.100"/></svg>
      <svg class="af-m5 text-secondary" width="15" height="20"><use href="#trash"/></svg>
    </div>
    <div class="af-head d-flex"><div class="af-handle"></div>
      <ul class="nav af-tabs"><li class="nav-item"><span class="nav-link active">Transform</span></li><li class="nav-item"><span class="nav-link">Navigator</span></li><li class="nav-item"><span class="nav-link">History</span></li></ul>
      <svg class="af-burger" width="13" height="12"><use href="#burger"/></svg>
    </div>
    <div class="af-transform af-body d-flex">
      <svg class="af-anchor" width="46" height="46" viewBox="0 0 46 46"><path d="M0 0h8v4h11V0h8v4h11V0h8v8h-4v11h4v8h-4v11h4v8h-8v-4H27v4h-8v-4H8v4H0v-8h4V27H0v-8h4V8H0z" fill="#636363"/></svg>
      <div>
        <div class="af-grid">
          <span class="af-tlab">X:</span><div class="af-tfield">0 px</div><span class="af-tlab">W:</span><div class="af-tfield">0 px</div>
          <svg class="af-chain" width="9" height="25" viewBox="0 0 9 25"><path d="M1 10V1h7v9M1 15v9h7v-9M0 12.500h3M6 12.500h3" fill="none" stroke="#888" stroke-width="1.200"/></svg>
          <span class="af-tlab">Y:</span><div class="af-tfield">0 px</div><span class="af-tlab">H:</span><div class="af-tfield">0 px</div>
          <div class="af-gap"></div>
          <span class="af-tlab">R:</span><div class="af-tfield"><span>0 °</span><svg width="9" height="6" class="text-secondary"><use href="#chev"/></svg></div><span class="af-tlab">S:</span><div class="af-tfield"><span>0 °</span><svg width="9" height="6" class="text-secondary"><use href="#chev"/></svg></div>
        </div>
        <div class="af-torig">
          <div class="af-torig-main"><svg width="20" height="18" viewBox="0 0 20 18"><rect x="1" y="1" width="18" height="16" fill="none" stroke="#666" stroke-dasharray="5 3"/><rect y="9" width="11" height="9" rx="2" fill="#7a7a7a"/></svg></div>
          <div class="af-torig-dd"><svg width="10" height="6" class="text-light"><use href="#chev"/></svg></div>
        </div>
      </div>
    </div>
  </div>
</div>

<div class="af-status d-flex align-items-center">
  <svg class="ms-2" width="38" height="12" viewBox="0 0 38 12"><path d="M.5 0v12" stroke="#888"/><path d="M14 0v12L3 6zM38 0v12L26 6z" fill="#888"/></svg>
  <span class="af-count">1 of 1</span>
  <svg width="37" height="12" viewBox="0 0 37 12"><path d="M0 0v12l11-6z" fill="#eee"/><path d="M23 0v12l11-6z" fill="#777"/><path d="M36.500 0v12" stroke="#888"/></svg>
  <svg class="af-st1" width="16" height="17" viewBox="0 0 16 17"><rect x=".5" y=".5" width="13" height="15" fill="none" stroke="#ccc"/><path d="M3 4h8M3 6.500h8M3 9h8M3 11.500h8" stroke="#ccc"/><path d="M15.500 3v13.500H3" fill="none" stroke="#999"/></svg>
  <svg class="af-st2" width="17" height="14" viewBox="0 0 17 14"><path d="M6 2H15M3 5c-2 0-2 4 1 5" fill="none" stroke="#777"/><circle cx="8" cy="10" r="3" fill="none" stroke="#777" stroke-width="1.300"/><path d="M7 0L3 2.500 7 5" fill="none" stroke="#777"/></svg>
  <svg class="af-st3" width="19" height="20" viewBox="0 0 19 20"><path d="M10 2h8v17H5v-3" fill="none" stroke="#ccc" stroke-width="1.100"/><circle cx="7" cy="7" r="7" fill="#2fc77a"/><path d="M3.500 7l2.500 2.500 4.500-5" fill="none" stroke="#143" stroke-width="1.500"/></svg>
  <span class="af-hint"><b>Drag</b> to marquee select. <b>Click</b> an object to select it.</span>
</div>
</body>
</html>
